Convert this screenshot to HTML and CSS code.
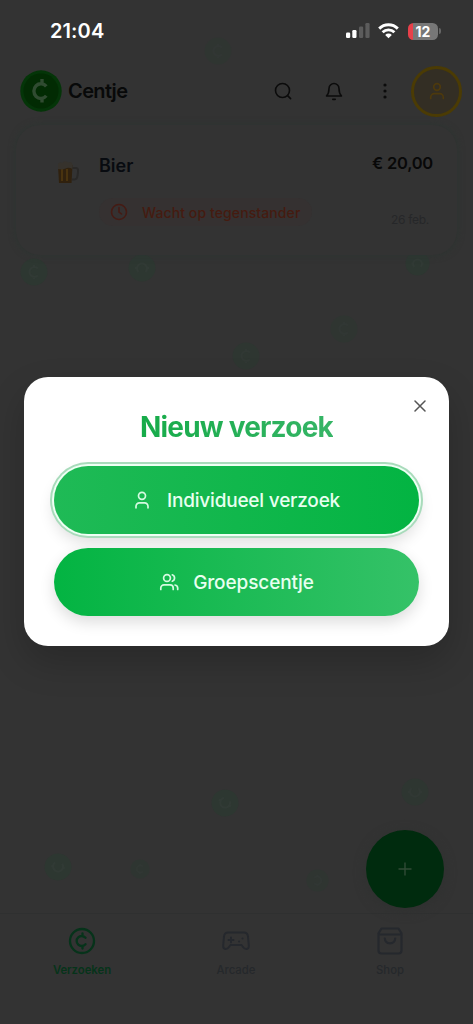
FILE: index.html
```html
<!DOCTYPE html>
<html lang="nl">
<head>
<meta charset="utf-8">
<meta name="viewport" content="width=device-width, initial-scale=1">
<title>Centje</title>
<link rel="stylesheet" href="styles.css">
</head>
<body>
<svg width="0" height="0" class="defs" aria-hidden="true">
  <symbol id="coin" viewBox="0 0 28 28"><circle cx="14" cy="14" r="13.5" fill="#2d3731"/><path d="M18 10.500a5 5 0 1 0 0 7M14 7v3M14 18v3" fill="none" stroke="#313a35" stroke-width="2.2"/></symbol>
</svg>
<div class="screen">
  <header class="status">
    <span class="time">21:04</span>
    <div class="indicators">
      <svg width="24" height="16" viewBox="0 0 24 16"><rect x="0" y="9.5" width="4.2" height="5.5" rx="1.2" fill="#fff"/><rect x="6.3" y="7" width="4.2" height="8" rx="1.2" fill="#fff"/><rect x="13" y="3.5" width="4.2" height="11.5" rx="1.2" fill="#5c5c5c"/><rect x="19.4" y="0" width="4.2" height="15" rx="1.2" fill="#5c5c5c"/></svg>
      <svg class="wifi" width="21" height="16" viewBox="0 0 21 16" fill="none" stroke="#fff" stroke-width="2.900"><path d="M1.2 5.600a13.2 13.2 0 0 1 18.6 0"/><path d="M4.600 9.300a8.4 8.4 0 0 1 11.8 0"/><path d="M10.500 15.200 7.200 11.900a4.600 4.600 0 0 1 6.600 0z" fill="#fff" stroke="none"/></svg>
      <div class="battery"><span>12</span></div><i class="battery-tip"></i>
    </div>
  </header>

  <nav class="appbar">
    <svg class="logo" width="42" height="42" viewBox="0 0 42 42"><circle cx="21" cy="21" r="20.7" fill="#043508"/><circle cx="21" cy="21" r="17.5" fill="#022b03"/><path d="M26.300 16.400a7 7.400 0 1 0 0 9.400M22 9v5M22 28v4.500" fill="none" stroke="#304b31" stroke-width="3.400"/></svg>
    <span class="brand">Centje</span>
    <div class="tools">
      <svg width="20" height="20" viewBox="0 0 20 20" fill="none" stroke="#0b0b0b" stroke-width="1.600" stroke-linecap="round"><circle cx="9.500" cy="9.500" r="7"/><path d="m14.600 14.600 3 3"/></svg>
      <svg width="20" height="20" viewBox="0 0 24 24" fill="none" stroke="#0b0b0b" stroke-width="1.900" stroke-linecap="round" stroke-linejoin="round"><path d="M6 9a6 6 0 0 1 12 0c0 5 .5 6.500 3 9H3c2.500-2.500 3-4 3-9M10.500 22h3"/></svg>
      <svg width="20" height="20" viewBox="0 0 20 20" fill="#0b0b0b"><circle cx="10" cy="4" r="1.600"/><circle cx="10" cy="10" r="1.600"/><circle cx="10" cy="16" r="1.600"/></svg>
    </div>
    <div class="avatar"><svg width="18" height="18" viewBox="0 0 18 18" fill="none" stroke="#4d390d" stroke-width="1.700" stroke-linecap="round"><circle cx="9" cy="5" r="3.300"/><path d="M2.700 16.500v-1.200a3.600 3.600 0 0 1 3.600-3.600h5.400a3.600 3.600 0 0 1 3.600 3.600v1.200"/></svg></div>
  </nav>

  <main class="feed">
    <article class="card">
      <svg class="beer" width="24" height="26" viewBox="0 0 24 26"><path d="M16 8h4q2.500 0 2 4l-.5 4q-.5 3.500-3 3.500H16" fill="none" stroke="#292827" stroke-width="2"/><path d="M2 5h14.500l-1 18H3z" fill="#30210e"/><path d="M5 9h2v12H5zM10 9h2v12h-2z" fill="#49330f"/><path d="M2 9V4q2-3 4-1 3-3 6-.5 4-1.500 4.500 2V9q-4-2-7-.5T2 9" fill="#36322c"/></svg>
      <div class="details">
        <h2>Bier</h2>
        <div class="pill"><svg width="18" height="18" viewBox="0 0 18 18" fill="none" stroke="#451b14" stroke-width="1.600" stroke-linecap="round"><circle cx="9" cy="9" r="7.500"/><path d="M9 4.500V9l2.500 2"/></svg><span>Wacht op tegenstander</span></div>
      </div>
      <div class="meta"><strong>€ 20,00</strong><time>26 feb.</time></div>
    </article>
    <svg class="coin c0"><use href="#coin"/></svg>
    <svg class="coin c1"><use href="#coin"/></svg>
    <svg class="coin c2"><use href="#coin"/></svg>
    <svg class="coin c3"><use href="#coin"/></svg>
    <svg class="coin c4"><use href="#coin"/></svg>
    <svg class="coin c5"><use href="#coin"/></svg>
    <svg class="coin c6"><use href="#coin"/></svg>
    <svg class="coin c7"><use href="#coin"/></svg>
    <svg class="coin c8"><use href="#coin"/></svg>
    <svg class="coin c9"><use href="#coin"/></svg>
    <svg class="coin c10"><use href="#coin"/></svg>
    <div class="fab"><svg width="14" height="14" viewBox="0 0 14 14" stroke="#304b36" stroke-width="1.400"><path d="M7 .5v13M.5 7h13"/></svg></div>
  </main>

  <footer class="tabs">
    <div class="tab active"><svg width="28" height="28" viewBox="0 0 28 28" fill="none" stroke="#06331a" stroke-width="2.300" stroke-linecap="round"><circle cx="14" cy="14" r="12"/><path d="M17.500 10.800a5 5 0 1 0 0 6.400M14.500 6.500v2.500M14.500 19v2.500"/></svg><span>Verzoeken</span></div>
    <div class="tab"><svg width="28" height="28" viewBox="0 0 28 28" fill="none" stroke="#25282d" stroke-width="2" stroke-linecap="round" stroke-linejoin="round"><path d="M6 5.500h16q3.500 0 4 4l.8 9q.2 3.500-2.600 3.500-1.800 0-3.200-2L19.500 18h-11L7 20q-1.400 2-3.200 2Q1 22 1.200 18.500l.8-9q.5-4 4-4z"/><path d="M9 10.500v5M6.500 13h5M17 14.500h.1M20.500 11.500h.1"/></svg><span>Arcade</span></div>
    <div class="tab"><svg width="28" height="28" viewBox="0 0 28 28" fill="none" stroke="#25282d" stroke-width="2.200" stroke-linecap="round" stroke-linejoin="round"><path d="M5.500 1.500h17l3 4.800v17.200q0 3-3 3h-17q-3 0-3-3V6.300zM2.500 7.500h23M8.800 11.500q.4 4.800 5.200 4.800t5.200-4.800"/></svg><span>Shop</span></div>
  </footer>

  <div class="overlay">
    <section class="dialog">
      <svg class="close" width="12" height="12" viewBox="0 0 12 12" stroke="#555" stroke-width="1.500" stroke-linecap="round"><path d="m1 1 10 10M11 1 1 11"/></svg>
      <h1><span>Nieuw verzoek</span></h1>
      <button class="btn focused"><svg width="18" height="20" viewBox="0 0 18 20" fill="none" stroke="#d5fae1" stroke-width="1.700" stroke-linecap="round"><circle cx="9" cy="5.800" r="3.500"/><path d="M3 17.800v-1.600a3.400 3.400 0 0 1 3.400-3.400h5.200a3.400 3.400 0 0 1 3.400 3.400v1.600"/></svg><span class="b-one">Individueel verzoek</span></button>
      <button class="btn second"><svg width="20" height="20" viewBox="0 0 20 20" fill="none" stroke="#d5fae1" stroke-width="1.700" stroke-linecap="round"><circle cx="8" cy="6" r="3.400"/><path d="M1.800 17.500V16a3.200 3.200 0 0 1 3.200-3.200h6a3.200 3.200 0 0 1 3.200 3.200v1.500M13.300 2.800a3.400 3.400 0 0 1 0 6.400M16 13a3.200 3.200 0 0 1 2.700 3.100v1.400"/></svg><span class="b-two">Groepscentje</span></button>
    </section>
  </div>
</div>
</body>
</html>
```

FILE: styles.css
```css
* { box-sizing: border-box; }
body { margin: 0; background: #333; font-family: Inter, "Liberation Sans", sans-serif; }
h1, h2 { margin: 0; }
svg { display: block; flex: none; }
.defs { position: absolute; }
.screen { position: relative; width: 473px; height: 1024px; overflow: hidden; display: flex; flex-direction: column; background: #333; }

.status { height: 61px; padding: 1px 32px 0 50px; display: flex; align-items: center; justify-content: space-between; }
.time { color: #fff; font-size: 20px; font-weight: 600; letter-spacing: .1px; }
.indicators { display: flex; align-items: center; }
.wifi { margin: 0 9px 0 8px; }
.battery { width: 30px; height: 17px; border-radius: 5.500px; background: linear-gradient(90deg, #e8404a 5px, #777 5px); color: #fff; font-size: 14px; font-weight: 700; line-height: 17px; text-align: center; }
.battery-tip { width: 2px; height: 6px; margin-left: 1px; border-radius: 0 2px 2px 0; background: #666; }

.appbar { height: 60px; padding: 0 11px 0 20px; display: flex; align-items: center; }
.brand { margin-left: 6px; color: #080909; font-size: 20px; font-weight: 600; letter-spacing: -.6px; }
.tools { margin-left: auto; display: flex; gap: 31px; }
.avatar { width: 51px; height: 51px; margin-left: 16px; border: 3px solid #4b3b04; border-radius: 50%; background: #332e24; display: grid; place-items: center; }

.feed { height: 792px; padding: 4px 16px 0; }
.card { position: relative; z-index: 1; height: 130px; padding: 29px 24px 0 40px; display: flex; border-radius: 24px; background: #333; box-shadow: 0 0 7px #2c3531; }
.beer { margin-top: 6px; }
.details { margin-left: 19px; }
.details h2 { color: #080b10; font-size: 18px; font-weight: 600; line-height: 24px; letter-spacing: 0; }
.pill { width: 213px; height: 28px; margin-top: 20px; padding: 0 11px; border-radius: 14px; background: #353131; display: flex; align-items: center; gap: 14px; color: #451b10; font-size: 14px; font-weight: 500; letter-spacing: .1px; white-space: nowrap; }
.meta { margin-left: auto; display: flex; flex-direction: column; align-items: flex-end; white-space: nowrap; }
.meta strong { color: #080808; font-size: 16.500px; font-weight: 600; line-height: 18px; letter-spacing: -.25px; }
.meta time { margin: 40px 4px 0 0; color: #262729; font-size: 12px; line-height: 16px; letter-spacing: -.3px; }

.coin { position: absolute; width: 28px; height: 28px; }
.c0 { left: 204px; top: 37px; opacity: .5; }
.c1 { left: 20px; top: 258px; }
.c2 { left: 128px; top: 254px; transform: rotate(90deg); }
.c3 { left: 405px; top: 251px; width: 25px; height: 25px; transform: rotate(90deg); }
.c4 { left: 330px; top: 315px; opacity: .65; }
.c5 { left: 232px; top: 342px; opacity: .8; }
.c6 { left: 211px; top: 789px; transform: rotate(-60deg); }
.c7 { left: 401px; top: 778px; opacity: .8; transform: rotate(-90deg); }
.c8 { left: 44px; top: 853px; transform: rotate(-80deg); }
.c9 { left: 130px; top: 859px; width: 20px; height: 20px; opacity: .7; }
.c10 { left: 306px; top: 869px; width: 23px; height: 23px; opacity: .65; transform: rotate(180deg); }
.fab { position: absolute; left: 366px; top: 830px; width: 78px; height: 78px; border-radius: 50%; background: #002b0e; box-shadow: 0 3px 12px #2f3130; display: grid; place-items: center; }

.tabs { height: 111px; padding-top: 13px; border-top: 1px solid #2f3030; display: grid; grid-template-columns: 154px 154px 154px; padding-left: 5px; }
.tab { display: flex; flex-direction: column; align-items: center; gap: 8px; color: #25282b; font-size: 11.300px; font-weight: 500; line-height: 14px; }
.active { color: #06331a; font-weight: 600; }

.overlay { position: absolute; inset: 0; display: flex; justify-content: center; align-items: flex-start; padding-top: 377px; }
.dialog { position: relative; width: 425px; height: 269px; padding: 30px 30px 0; border-radius: 24px; background: #fff; box-shadow: 0 16px 36px rgba(0,0,0,.2); }
.close { position: absolute; right: 23px; top: 23px; }
.dialog h1 { height: 40px; margin-bottom: 19px; text-align: center; font-size: 28px; font-weight: 700; line-height: 40px; letter-spacing: -.8px; }
.dialog h1 span { background: linear-gradient(90deg, #16ab49, #36b566); background-clip: text; -webkit-background-clip: text; color: transparent; }
.btn { width: 100%; height: 68px; border: 0; border-radius: 34px; display: flex; align-items: center; justify-content: center; color: #e8fff0; font: 500 19px Inter, "Liberation Sans", sans-serif; letter-spacing: -.2px; background: linear-gradient(90deg, #1fba56, #03b442); gap: 16px; }
.focused { box-shadow: 0 0 0 2px #eefff4, 0 0 0 4px #a8dbbb, 0 8px 16px rgba(0,0,0,.14); }
.second { margin-top: 14px; gap: 14px; letter-spacing: -.1px; background: linear-gradient(90deg, #03b442, #35c268); box-shadow: 0 6px 15px rgba(0,0,0,.14); }
```
